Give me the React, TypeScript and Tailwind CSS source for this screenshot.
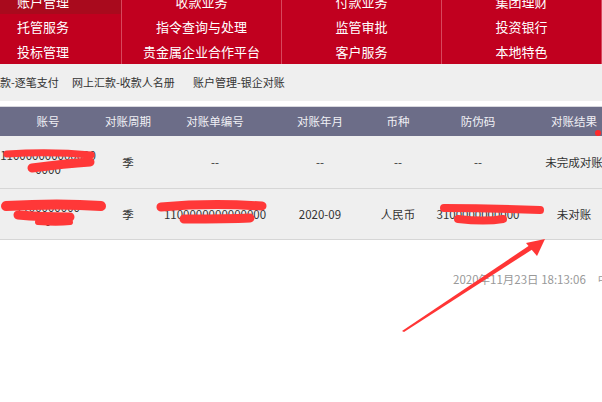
import React from 'react';

const navRows = [
  ['账户管理', '收款业务', '付款业务', '集团理财'],
  ['托管服务', '指令查询与处理', '监管审批', '投资银行'],
  ['投标管理', '贵金属企业合作平台', '客户服务', '本地特色'],
];

const cols = [
  { title: '账号', w: 'w-[112px]' },
  { title: '对账周期', w: 'w-[48px]' },
  { title: '对账单编号', w: 'w-[126px]' },
  { title: '对账年月', w: 'w-[84px]' },
  { title: '币种', w: 'w-[72px]' },
  { title: '防伪码', w: 'w-[88px]' },
  { title: '对账结果', w: 'w-[104px]' },
];

const rows = [
  { h: 'h-[53px]', cells: ['110000000000000\n0000', '季', '--', '--', '--', '--', '未完成对账'] },
  { h: 'h-[51px]', cells: ['1100000000\n0', '季', '1100000000000000', '2020-09', '人民币', '3100000000000', '未对账'] },
];

// red scribbles + arrow drawn over the screenshot
const Marks: React.FC = () => (
  <svg className="absolute left-0 top-0 pointer-events-none" width="602" height="402" viewBox="0 0 602 402">
    <g stroke="#ff3838" strokeLinecap="round" fill="none">
      <path d="M7 154 C40 152 70 153 91 155" strokeWidth="7" />
      <path d="M32 168 C55 165 75 163 90 162" strokeWidth="9" />
      <path d="M6 206 C40 204 75 204 101 206" strokeWidth="10" />
      <path d="M18 215 C40 217 60 217 70 217" strokeWidth="9" />
      <path d="M38 222 C50 223 62 223 70 222" strokeWidth="6" />
      <path d="M161 207 C195 204 230 204 262 206" strokeWidth="9" />
      <path d="M184 219 C205 219 230 219 250 218" strokeWidth="9" />
      <path d="M444 208 C480 208 515 209 540 210" strokeWidth="8" />
      <path d="M458 219 C475 221 492 221 503 219" strokeWidth="8" />
    </g>
    <circle cx="598" cy="133" r="3" fill="#ff2a2a" />
    <polygon points="402,331 404,332 533,249 530,245" fill="#ff3535" />
    <polygon points="526,243 545,239 537,256" fill="#ff3535" />
  </svg>
);

export default function App() {
  return (
    <div
      className="relative w-[602px] h-[402px] overflow-hidden bg-white"
      style={{ fontFamily: '"Noto Sans CJK SC", "Noto Sans", sans-serif' }}
    >
      <div className="h-[64px] overflow-hidden bg-[#c1001f]">
        <div className="mt-[-10px]">
          {navRows.map((r, ri) => (
            <div key={ri} className={`flex ${ri === 0 ? 'h-[24px]' : 'h-[25px]'}`}>
              {r.map((t, ci) => (
                <div
                  key={t}
                  className={`flex items-center text-[13px] text-white border-r border-[#d8475c] ${
                    ci === 0 ? 'w-[128px] pl-[17px]' : 'w-[169px] justify-center'
                  } ${ri === 0 && ci === 0 ? 'bg-[#a90a1d]' : ''}`}
                >
                  {t}
                </div>
              ))}
            </div>
          ))}
        </div>
      </div>

      <div className="h-[37px] bg-[#efefef] flex items-center text-[11px] text-[#333] whitespace-nowrap">
        <span className="w-[72px] shrink-0">款-逐笔支付</span>
        <span className="w-[121px] shrink-0">网上汇款-收款人名册</span>
        <span>账户管理-银企对账</span>
      </div>
      <div className="h-[6px] bg-white border-b border-[#d8d8de]" />

      <div className="ml-[-8px]">
        <div className="flex h-[29px] bg-[#6c6d88] text-[11.5px] text-[#f0f0f5]">
          {cols.map((c) => (
            <div key={c.title} className={`${c.w} shrink-0 flex items-center justify-center`}>
              {c.title}
            </div>
          ))}
        </div>
        {rows.map((r, ri) => (
          <div key={ri} className={`flex ${r.h} bg-[#efefef] border-b border-[#d6d6d6] text-[11.5px] text-[#333]`}>
            {r.cells.map((c, ci) => (
              <div
                key={ci}
                className={`${cols[ci].w} shrink-0 flex items-center justify-center text-center whitespace-pre-line leading-[14px] ${
                  ci === 0 || ci === 2 || ci === 5 ? 'break-all' : ''
                }`}
              >
                {c}
              </div>
            ))}
          </div>
        ))}
      </div>

      <div className="flex pt-[31px] pl-[453px] text-[11.5px] text-[#999] whitespace-nowrap">
        <span>2020年11月23日 18:13:06</span>
        <span className="ml-[12px]">中国</span>
      </div>

      <Marks />
    </div>
  );
}
